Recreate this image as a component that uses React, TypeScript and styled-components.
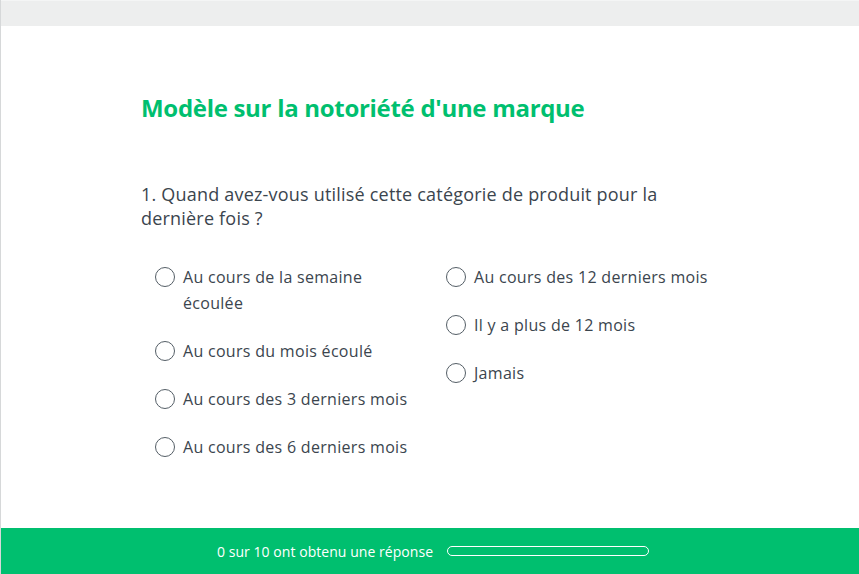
import React from "react";
import styled, { createGlobalStyle } from "styled-components";

const Global = createGlobalStyle`
  html, body { margin: 0; padding: 0; background: #ffffff; }
  body { font-family: "Open Sans", "Liberation Sans", sans-serif; }
  * { box-sizing: border-box; }
`;

const Page = styled.div`
  width: 859px;
  height: 574px;
  display: flex;
  flex-direction: column;
  border-left: 1px solid #d6d8d9;
  background: #ffffff;
  overflow: hidden;
`;

const TopBar = styled.div`
  height: 26px;
  flex: none;
  background: #edeeee;
  border-top: 1px solid #f4f5f5;
`;

const Main = styled.main`
  flex: 1;
  padding: 66px 0 0 140px;
  display: flex;
  flex-direction: column;
`;

const Title = styled.h1`
  margin: 0;
  font-family: "Open Sans", sans-serif;
  font-weight: 700;
  font-size: 24px;
  line-height: 32px;
  color: #00bf6f;
  letter-spacing: -0.3px;
`;

const Question = styled.h2`
  margin: 58px 0 0 0;
  width: 560px;
  font-family: "Open Sans", sans-serif;
  font-weight: 400;
  font-size: 18px;
  line-height: 24px;
  letter-spacing: 0.2px;
  color: #3b454e;
`;

const Options = styled.div`
  margin-top: 34px;
  padding-left: 14px;
  display: flex;
  align-items: flex-start;
`;

const Column = styled.div`
  width: 291px;
  display: flex;
  flex-direction: column;
  gap: 22px;
`;

const Option = styled.label`
  display: flex;
  align-items: flex-start;
  gap: 8px;
`;

const Radio = styled.span`
  flex: none;
  width: 20px;
  height: 20px;
  margin-top: 3px;
  border-radius: 50%;
  border: 1.5px solid #545e66;
  background: #ffffff;
`;

const Label = styled.span`
  max-width: 237px;
  font-family: "Open Sans", sans-serif;
  font-size: 16px;
  line-height: 26px;
  letter-spacing: 0.3px;
  color: #3b454e;
`;

const Footer = styled.footer`
  height: 46px;
  flex: none;
  background: #00bf6f;
  display: flex;
  align-items: center;
  padding-left: 216px;
  gap: 14px;
`;

const Progress = styled.span`
  font-family: "Open Sans", sans-serif;
  font-size: 14px;
  letter-spacing: 0.05px;
  color: #ffffff;
`;

const Bar = styled.span`
  width: 202px;
  height: 10px;
  border: 1.5px solid #ffffff;
  border-radius: 6px;
`;

const col1 = [
  "Au cours de la semaine écoulée",
  "Au cours du mois écoulé",
  "Au cours des 3 derniers mois",
  "Au cours des 6 derniers mois",
];
const col2 = [
  "Au cours des 12 derniers mois",
  "Il y a plus de 12 mois",
  "Jamais",
];

export default function App() {
  return (
    <>
      <Global />
      <Page>
        <TopBar />
        <Main>
          <Title>Modèle sur la notoriété d'une marque</Title>
          <Question>
            1. Quand avez-vous utilisé cette catégorie de produit pour la dernière fois ?
          </Question>
          <Options>
            {[col1, col2].map((col, i) => (
              <Column key={i}>
                {col.map((t) => (
                  <Option key={t}>
                    <Radio />
                    <Label>{t}</Label>
                  </Option>
                ))}
              </Column>
            ))}
          </Options>
        </Main>
        <Footer>
          <Progress>0 sur 10 ont obtenu une réponse</Progress>
          <Bar />
        </Footer>
      </Page>
    </>
  );
}
